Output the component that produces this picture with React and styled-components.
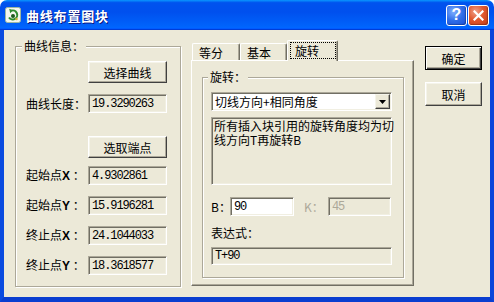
import React from 'react';
import styled, { createGlobalStyle, css } from 'styled-components';

const CJK = `"Noto Sans CJK SC", "Noto Sans", sans-serif`;
const MONO = `"Liberation Mono", "DejaVu Sans Mono", monospace`;
const FACE = '#ECE9D8';
const SHADOW = '#ACA899';
const DARK = '#716F64';

const Global = createGlobalStyle`
  html, body { margin: 0; padding: 0; background: #ffffff; }
  body { font-family: ${CJK}; font-size: 12px; color: #000; }
  * { box-sizing: border-box; }
`;

const Window = styled.div`
  width: 494px;
  height: 302px;
  display: flex;
  flex-direction: column;
  overflow: hidden;
`;

const TitleBar = styled.div`
  height: 30px;
  flex: none;
  display: flex;
  align-items: center;
  padding: 0 5px 0 5px;
  border-radius: 7px 7px 0 0;
  background: linear-gradient(
    to bottom,
    #0997ff 0%,
    #0053ee 9%,
    #0050ee 40%,
    #0063fb 86%,
    #0066ff 92%,
    #005bff 95%,
    #003dd7 97%,
    #003dd7 100%
  );
`;

const TitleText = styled.span`
  margin-left: 5px;
  flex: 1;
  color: #fff;
  font-weight: bold;
  font-size: 13px;
  letter-spacing: 0.8px;
  text-shadow: 1px 1px 0 #0a1883;
`;

const CapButton = styled.div`
  width: 21px;
  height: 21px;
  border: 1px solid #fff;
  border-radius: 3px;
  display: flex;
  align-items: center;
  justify-content: center;
  margin-left: 1px;
  ${(p) =>
    p.$close
      ? css`
          background: radial-gradient(circle at 35% 30%, #f0a08a 0%, #e0582f 45%, #c33a16 100%);
        `
      : css`
          background: radial-gradient(circle at 35% 30%, #7fb0ff 0%, #2f6de8 50%, #1b4ed6 100%);
        `}
  box-shadow: inset -1px -1px 1px rgba(0, 0, 0, 0.25);
`;

const HelpMark = styled.span`
  color: #fff;
  font-family: "Liberation Sans", sans-serif;
  font-weight: bold;
  font-size: 16px;
  line-height: 16px;
`;

const Body = styled.div`
  flex: 1;
  display: flex;
  align-items: flex-start;
  background: ${FACE};
  border-left: 4px solid #0a4be0;
  border-right: 4px solid #0a46da;
  border-bottom: 5px solid #0a3ed0;
`;

const GroupBox = styled.div`
  position: relative;
  flex: none;
  width: ${(p) => p.$w}px;
  height: ${(p) => p.$h}px;
  margin: ${(p) => p.$m};
  padding: ${(p) => p.$pad};
  border: 1px solid ${SHADOW};
  box-shadow: inset 1px 1px 0 #fff, 1px 1px 0 #fff;
  display: flex;
  flex-direction: column;
`;

const Legend = styled.span`
  position: absolute;
  top: -8px;
  left: ${(p) => p.$left}px;
  padding: 0 2px;
  line-height: 14px;
  background: ${FACE};
`;

const Row = styled.div`
  display: flex;
  align-items: center;
  margin-top: ${(p) => p.$mt || 0}px;
`;

const Label = styled.span`
  width: ${(p) => p.$w}px;
  flex: none;
  margin-left: ${(p) => p.$ml || 0}px;
  line-height: 14px;
  white-space: nowrap;
  color: ${(p) => (p.$disabled ? SHADOW : '#000')};
`;

const Bold = styled.b`
  font-family: "Liberation Sans", sans-serif;
  font-weight: bold;
  font-size: 12px;
`;

const Button = styled.div`
  width: ${(p) => p.$w}px;
  height: ${(p) => p.$h}px;
  flex: none;
  display: flex;
  align-items: center;
  justify-content: center;
  background: ${FACE};
  font-size: 12px;
  border: 1px solid;
  border-color: #fff #404040 #404040 #fff;
  box-shadow: inset -1px -1px 0 ${SHADOW}, inset 1px 1px 0 #f5f4ea;
  ${(p) =>
    p.$default &&
    css`
      border: 1px solid #000;
      box-shadow: inset 1px 1px 0 #fff, inset -1px -1px 0 #404040, inset -2px -2px 0 ${SHADOW};
    `}
`;

const TextBox = styled.div`
  width: ${(p) => p.$w}px;
  height: ${(p) => p.$h || 19}px;
  flex: none;
  display: flex;
  align-items: center;
  padding-left: 3px;
  background: ${(p) => (p.$white ? '#fff' : FACE)};
  border: 1px solid;
  border-color: ${SHADOW} #fff #fff ${SHADOW};
  box-shadow: inset 1px 1px 0 ${DARK}, inset -1px -1px 0 #f1efe2;
  font-family: ${MONO};
  font-size: 12px;
  letter-spacing: -1.1px;
  white-space: nowrap;
  color: ${(p) => (p.$disabled ? SHADOW : '#000')};
`;

const LeftColumn = styled.div`
  display: flex;
  flex-direction: column;
  padding-left: 10px;
`;

const TabArea = styled.div`
  flex: none;
  width: 223px;
  margin: 10px 0 0 10px;
  display: flex;
  flex-direction: column;
`;

const TabStrip = styled.div`
  height: 20px;
  display: flex;
  align-items: flex-end;
  padding-left: 1px;
`;

const Tab = styled.div`
  width: ${(p) => p.$w}px;
  height: ${(p) => (p.$active ? 21 : 17)}px;
  flex: none;
  margin-bottom: ${(p) => (p.$active ? -1 : 0)}px;
  position: relative;
  z-index: ${(p) => (p.$active ? 1 : 0)};
  display: flex;
  align-items: ${(p) => (p.$active ? 'flex-start' : 'center')};
  padding-left: ${(p) => (p.$active ? 2 : 6)}px;
  padding-top: ${(p) => (p.$active ? 1 : 0)}px;
  background: ${FACE};
  border-top: 1px solid #fff;
  border-left: 1px solid #fff;
  border-right: 1px solid ${DARK};
  border-radius: 2px 2px 0 0;
  box-shadow: inset -1px 0 0 ${SHADOW};
  white-space: nowrap;
`;

const Focus = styled.span`
  width: 46px;
  border: 1px dotted #000;
  padding-left: 4px;
  line-height: 15px;
  white-space: nowrap;
`;

const Panel = styled.div`
  width: 223px;
  height: 226px;
  padding: 16px 0 0 10px;
  background: ${FACE};
  border: 1px solid;
  border-color: #fff ${DARK} ${DARK} #fff;
  box-shadow: inset -1px -1px 0 ${SHADOW};
`;

const Combo = styled.div`
  width: 181px;
  height: 19px;
  display: flex;
  align-items: center;
  justify-content: space-between;
  padding: 0 1px 0 3px;
  background: #fff;
  border: 1px solid;
  border-color: ${SHADOW} #fff #fff ${SHADOW};
  box-shadow: inset 1px 1px 0 ${DARK}, inset -1px -1px 0 #f1efe2;
  white-space: nowrap;
`;

const DropButton = styled.div`
  width: 15px;
  height: 15px;
  display: flex;
  align-items: center;
  justify-content: center;
  background: ${FACE};
  border: 1px solid;
  border-color: #f5f4ea #404040 #404040 #f5f4ea;
  box-shadow: inset -1px -1px 0 ${SHADOW};
`;

const MemoBox = styled.div`
  width: 181px;
  height: 68px;
  margin-top: 6px;
  padding: 1px 0 0 2px;
  background: ${FACE};
  border: 1px solid;
  border-color: ${SHADOW} #fff #fff ${SHADOW};
  box-shadow: inset 1px 1px 0 ${DARK}, inset -1px -1px 0 #f1efe2;
  line-height: 14px;
  white-space: nowrap;
`;

const Side = styled.div`
  flex: none;
  display: flex;
  flex-direction: column;
  gap: 12px;
  margin: 16px 0 0 11px;
`;

const TitleIcon = () => (
  <svg width="16" height="16" viewBox="0 0 16 16">
    <rect x="0.5" y="0.5" width="15" height="15" rx="2" fill="#f4f6ee" stroke="#9fb7a0" />
    <path d="M4 10.5 A4.5 4.5 0 1 0 6 3.8" fill="none" stroke="#2e8b2e" strokeWidth="2" />
    <path d="M4.2 1.8 L8 3.2 L5.2 6.2 Z" fill="#2e8b2e" />
    <circle cx="8" cy="9" r="2" fill="#1d5c1d" />
    <circle cx="11.5" cy="12" r="1.3" fill="#c9b23a" />
  </svg>
);

const CloseX = () => (
  <svg width="11" height="11" viewBox="0 0 11 11">
    <path d="M1.5 1.5 L9.5 9.5 M9.5 1.5 L1.5 9.5" stroke="#fff" strokeWidth="2.2" strokeLinecap="square" />
  </svg>
);

const Arrow = () => (
  <svg width="7" height="4" viewBox="0 0 7 4">
    <path d="M0 0 H7 L3.5 4 Z" fill="#000" />
  </svg>
);

const coords = [
  ['起始点', 'X', '4.9302861', 8],
  ['起始点', 'Y', '15.9196281', 11],
  ['终止点', 'X', '24.1044033', 11],
  ['终止点', 'Y', '18.3618577', 11],
];

export default function App() {
  return (
    <>
      <Global />
      <Window>
        <TitleBar>
          <TitleIcon />
          <TitleText>曲线布置图块</TitleText>
          <CapButton>
            <HelpMark>?</HelpMark>
          </CapButton>
          <CapButton $close>
            <CloseX />
          </CapButton>
        </TitleBar>
        <Body>
          <GroupBox $w={166} $h={241} $m="16px 0 0 11px" $pad="0">
            <Legend $left={6}>曲线信息：</Legend>
            <LeftColumn>
              <Row $mt={14}>
                <Label $w={62} />
                <Button $w={79} $h={22}>选择曲线</Button>
              </Row>
              <Row $mt={11}>
                <Label $w={62}>曲线长度：</Label>
                <TextBox $w={79}>19.3290263</TextBox>
              </Row>
              <Row $mt={23}>
                <Label $w={62} />
                <Button $w={79} $h={22}>选取端点</Button>
              </Row>
              {coords.map(([name, axis, value, mt]) => (
                <Row key={name + axis} $mt={mt}>
                  <Label $w={62}>
                    {name}
                    <Bold>{axis}</Bold> ：
                  </Label>
                  <TextBox $w={79}>{value}</TextBox>
                </Row>
              ))}
            </LeftColumn>
          </GroupBox>

          <TabArea>
            <TabStrip>
              <Tab $w={48}>等分</Tab>
              <Tab $w={47}>基本</Tab>
              <Tab $w={51} $active>
                <Focus>旋转</Focus>
              </Tab>
            </TabStrip>
            <Panel>
              <GroupBox $w={202} $h={201} $m="0" $pad="14px 0 0 8px">
                <Legend $left={5}>旋转：</Legend>
                <Combo>
                  <span>切线方向+相同角度</span>
                  <DropButton>
                    <Arrow />
                  </DropButton>
                </Combo>
                <MemoBox>
                  所有插入块引用的旋转角度均为切
                  <br />
                  线方向T再旋转B
                </MemoBox>
                <Row $mt={12}>
                  <Label $w={19}>B：</Label>
                  <TextBox $w={64} $white>90</TextBox>
                  <Label $w={24} $ml={10} $disabled>K：</Label>
                  <TextBox $w={63} $disabled>45</TextBox>
                </Row>
                <Row $mt={10}>
                  <Label $w={60}>表达式：</Label>
                </Row>
                <Row $mt={7}>
                  <TextBox $w={181} $h={18}>T+90</TextBox>
                </Row>
              </GroupBox>
            </Panel>
          </TabArea>

          <Side>
            <Button $w={57} $h={24} $default>确定</Button>
            <Button $w={57} $h={24}>取消</Button>
          </Side>
        </Body>
      </Window>
    </>
  );
}
